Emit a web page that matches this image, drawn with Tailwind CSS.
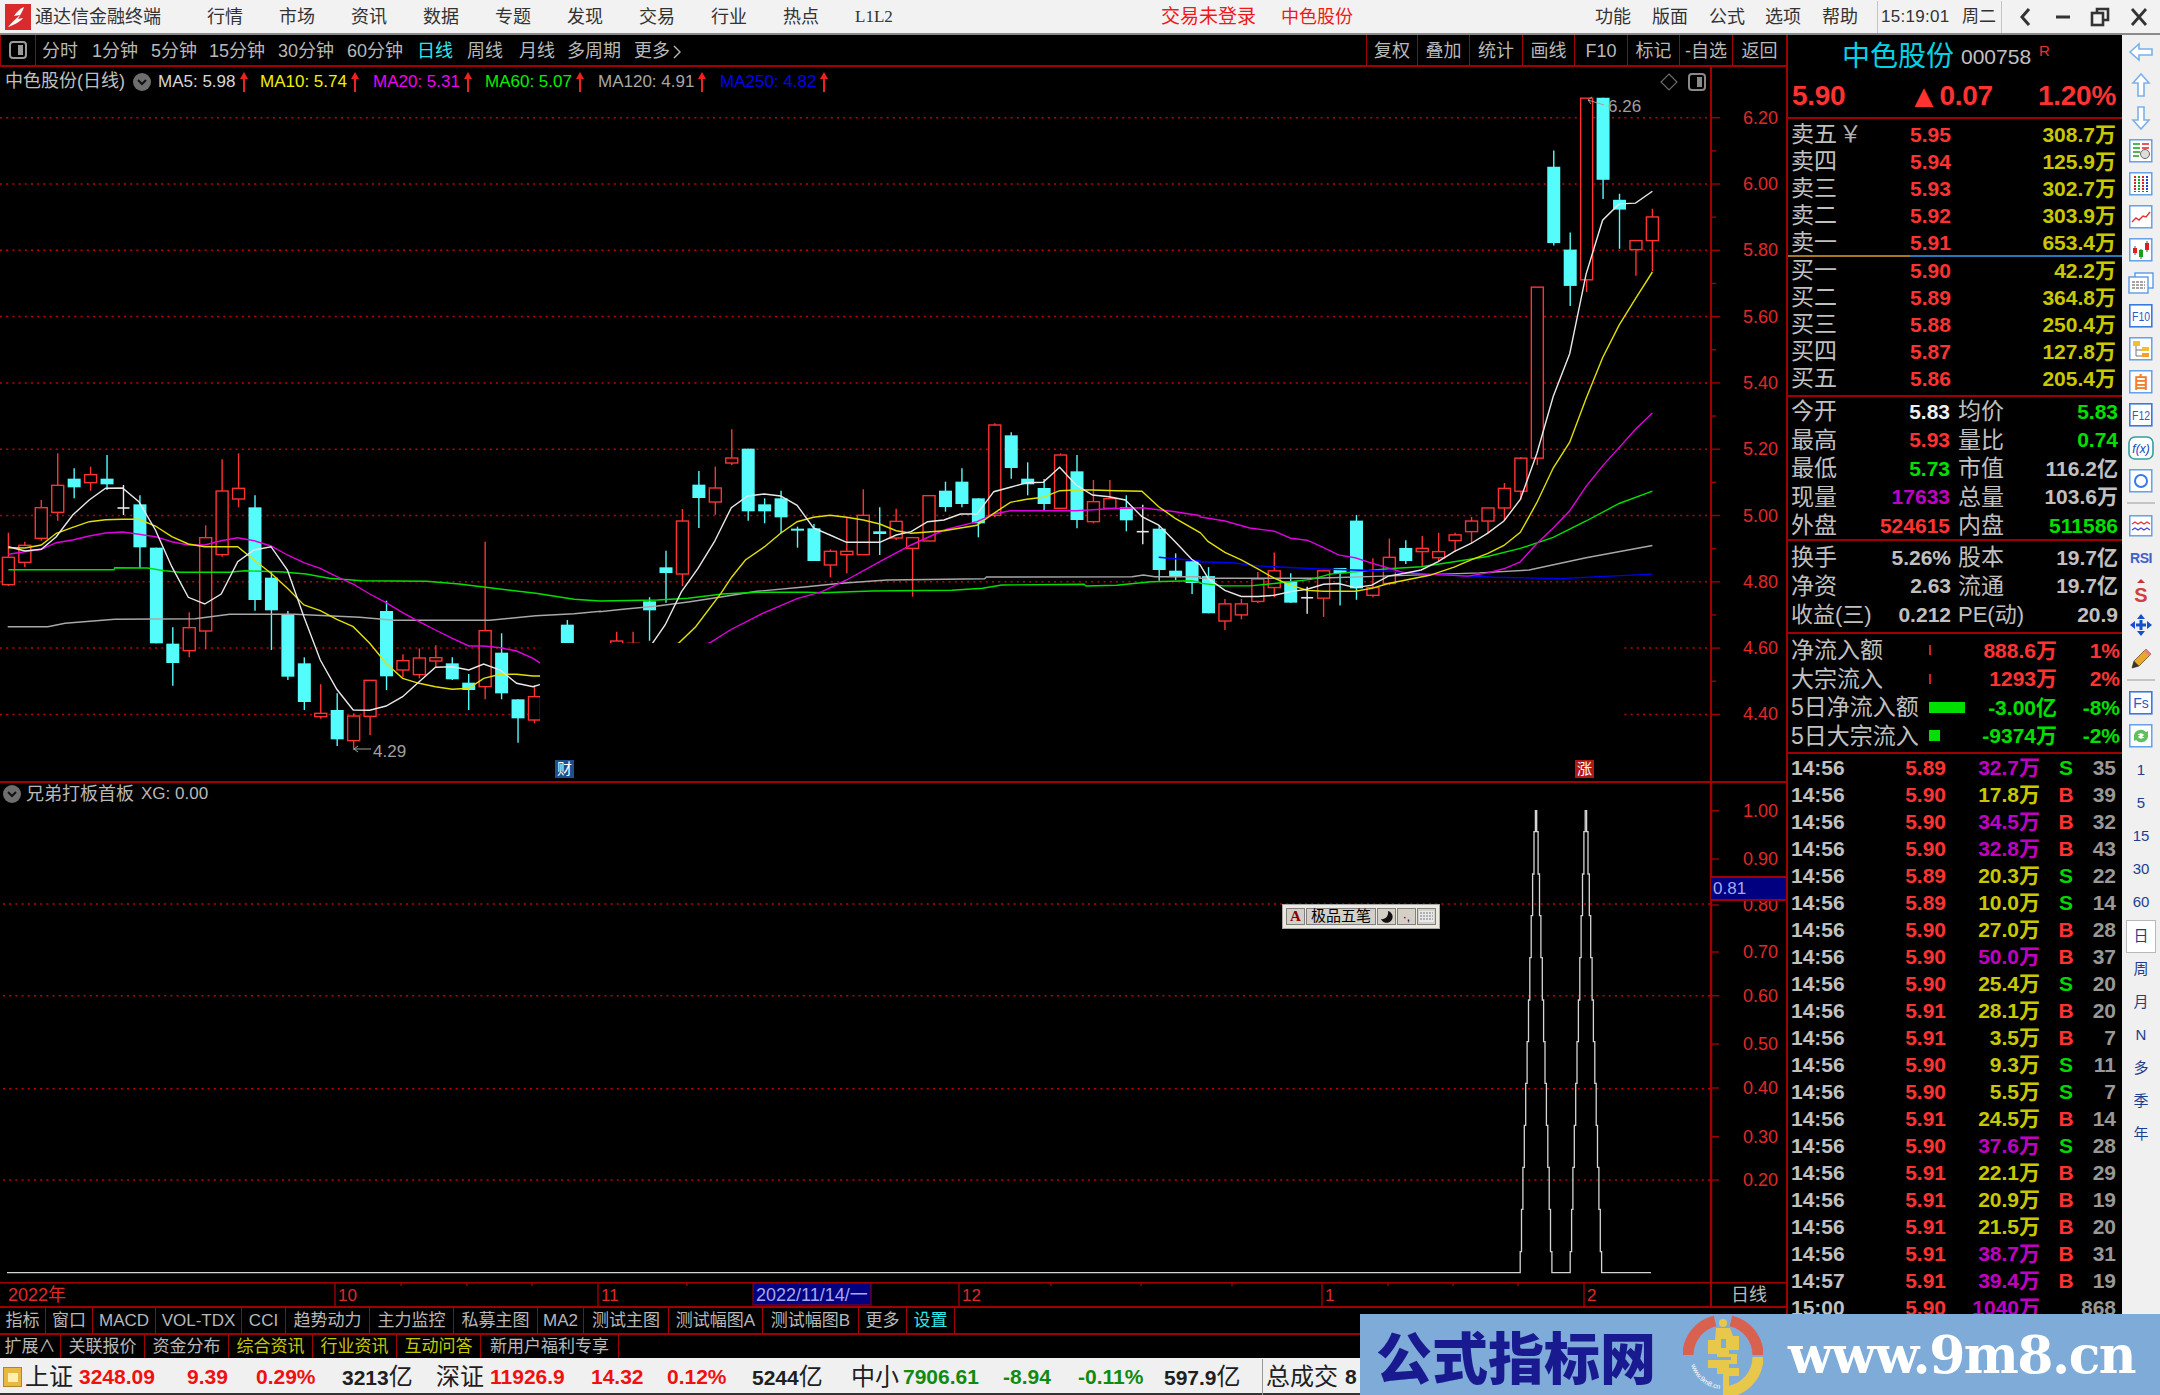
<!DOCTYPE html>
<html lang="zh-CN">
<head>
    <meta charset="UTF-8">
    <title>通达信金融终端 - 中色股份</title>
    <script src="https://cdn.jsdelivr.net/npm/@tailwindcss/browser@4"></script>
</head>
<body class="bg-black">
<div class="relative w-[2160px] h-[1395px] overflow-hidden flex flex-col bg-black font-['Liberation_Sans','Noto_Sans_CJK_SC',sans-serif]">

    <!-- Title bar -->
    <div class="h-[35px] shrink-0 flex items-center pt-[1px] bg-[#f2f2f2] border-b-2 border-[#8a8a8a] text-[18px] text-[#333]">
        <div class="w-[35px] h-full flex items-center justify-center">
            <svg width="26" height="26" viewBox="0 0 26 26"><rect width="26" height="26" fill="#d92b2b"/><path d="M19 3C14 5 11 9 9 12l6-1c-3 3-8 7-12 12 6-2 12-5 15-9l-5 1c2-4 5-8 6-12z" fill="#fff"/></svg>
        </div>
        <span class="w-[172px]">通达信金融终端</span>
        <span class="w-[72px]">行情</span>
        <span class="w-[72px]">市场</span>
        <span class="w-[72px]">资讯</span>
        <span class="w-[72px]">数据</span>
        <span class="w-[72px]">专题</span>
        <span class="w-[72px]">发现</span>
        <span class="w-[72px]">交易</span>
        <span class="w-[72px]">行业</span>
        <span class="w-[72px]">热点</span>
        <span class="w-[306px] text-[17px] font-['Liberation_Serif']">L1L2</span>
        <span class="w-[120px] text-[19px] whitespace-nowrap text-[#f01818]">交易未登录</span>
        <span class="w-[314px] text-[#f01818]">中色股份</span>
        <span class="w-[57px]">功能</span>
        <span class="w-[57px]">版面</span>
        <span class="w-[56px]">公式</span>
        <span class="w-[57px]">选项</span>
        <span class="w-[55px]">帮助</span>
        <div class="w-[125px] h-full flex items-center border-x border-[#c4c4c4] pl-[3px] text-[17px]">
            <span class="w-[81px] tracking-[0.3px]">15:19:01</span><span>周二</span>
        </div>
        <div class="flex-1 flex items-center justify-around pl-[6px] pr-[2px] text-[#333]">
            <svg width="18" height="22" viewBox="0 0 18 22" fill="none" stroke="#333" stroke-width="3"><path d="M12 3L5 11l7 8"/></svg>
            <svg width="18" height="22" viewBox="0 0 18 22" fill="none" stroke="#333" stroke-width="3"><path d="M2 11h14"/></svg>
            <svg width="20" height="22" viewBox="0 0 20 22" fill="none" stroke="#333" stroke-width="2.6"><rect x="2" y="7" width="11" height="12"/><path d="M7 7V3h11v11h-5"/></svg>
            <svg width="20" height="22" viewBox="0 0 20 22" fill="none" stroke="#333" stroke-width="2.8"><path d="M3 3l14 16M17 3L3 19"/></svg>
        </div>
    </div>

    <!-- Middle -->
    <div class="flex-1 flex min-h-0">
        <!-- Chart column -->
        <div class="w-[1788px] shrink-0 flex flex-col border-r-2 border-[#a00000]">
            <!-- Period toolbar -->
            <div class="h-[32px] shrink-0 flex items-center border-b-2 border-[#a00000] text-[18px] text-[#b8b8b8]">
                <div class="w-[36px] h-full flex items-center justify-center border-x border-[#a00000]">
                    <svg width="18" height="18" viewBox="0 0 18 18"><rect x="1" y="1" width="16" height="16" rx="3" fill="none" stroke="#9a9a9a" stroke-width="2"/><rect x="9" y="4" width="5" height="10" fill="#9a9a9a"/></svg>
                </div>
                <div class="h-full flex items-center pt-[3px] whitespace-nowrap">
                    <span class="ml-[6px] w-[50px]">分时</span>
                    <span class="w-[59px]">1分钟</span>
                    <span class="w-[58px]">5分钟</span>
                    <span class="w-[69px]">15分钟</span>
                    <span class="w-[69px]">30分钟</span>
                    <span class="w-[70px]">60分钟</span>
                    <span class="w-[50px] text-[#30e8e8]">日线</span>
                    <span class="w-[52px]">周线</span>
                    <span class="w-[48px]">月线</span>
                    <span class="w-[67px]">多周期</span>
                    <span class="flex items-center">更多<svg class="ml-[2px]" width="10" height="16" viewBox="0 0 10 16" fill="none" stroke="#b8b8b8" stroke-width="1.4"><path d="M2 2l6 6-6 6"/></svg></span>
                </div>
                <div class="ml-auto flex h-full">
                    <span class="w-[51px] pt-[3px] flex items-center justify-center border-l border-[#a00000]">复权</span>
                    <span class="w-[52px] pt-[3px] flex items-center justify-center border-l border-[#a00000]">叠加</span>
                    <span class="w-[53px] pt-[3px] flex items-center justify-center border-l border-[#a00000]">统计</span>
                    <span class="w-[52px] pt-[3px] flex items-center justify-center border-l border-[#a00000]">画线</span>
                    <span class="w-[53px] pt-[3px] flex items-center justify-center border-l border-[#a00000]">F10</span>
                    <span class="w-[52px] pt-[3px] flex items-center justify-center border-l border-[#a00000]">标记</span>
                    <span class="w-[53px] pt-[3px] flex items-center justify-center border-l border-[#a00000]">-自选</span>
                    <span class="w-[54px] pt-[3px] flex items-center justify-center border-l border-[#a00000]">返回</span>
                </div>
            </div>

            <!-- Main chart -->
            <div class="relative h-[714px] shrink-0">
                <svg id="main" class="block" width="1786" height="714" viewBox="0 67 1786 714"></svg>
                <div class="absolute left-[5px] top-0 h-[29px] flex items-center text-[17px] whitespace-nowrap">
                    <span class="w-[128px] text-[18px] text-[#c0c0c0]">中色股份(日线)</span>
                    <span class="w-[25px] flex">
                        <svg width="18" height="18" viewBox="0 0 18 18"><circle cx="9" cy="9" r="9" fill="#6e6e6e"/><path d="M5 7l4 4 4-4" fill="none" stroke="#111" stroke-width="2"/></svg>
                    </span>
                    <span class="w-[102px] flex items-center text-[#d8d8d8]">MA5: 5.98<svg class="ml-[3px]" width="10" height="20" viewBox="0 0 10 20"><path d="M5 0l4 7H6v13H4V7H1z" fill="#ef2020"/></svg></span>
                    <span class="w-[113px] flex items-center text-[#f0f000]">MA10: 5.74<svg class="ml-[3px]" width="10" height="20" viewBox="0 0 10 20"><path d="M5 0l4 7H6v13H4V7H1z" fill="#ef2020"/></svg></span>
                    <span class="w-[112px] flex items-center text-[#f000f0]">MA20: 5.31<svg class="ml-[3px]" width="10" height="20" viewBox="0 0 10 20"><path d="M5 0l4 7H6v13H4V7H1z" fill="#ef2020"/></svg></span>
                    <span class="w-[113px] flex items-center text-[#00f000]">MA60: 5.07<svg class="ml-[3px]" width="10" height="20" viewBox="0 0 10 20"><path d="M5 0l4 7H6v13H4V7H1z" fill="#ef2020"/></svg></span>
                    <span class="w-[122px] flex items-center text-[#a8a8a8]">MA120: 4.91<svg class="ml-[3px]" width="10" height="20" viewBox="0 0 10 20"><path d="M5 0l4 7H6v13H4V7H1z" fill="#ef2020"/></svg></span>
                    <span class="flex items-center text-[#0000f0]">MA250: 4.82<svg class="ml-[3px]" width="10" height="20" viewBox="0 0 10 20"><path d="M5 0l4 7H6v13H4V7H1z" fill="#ef2020"/></svg></span>
                </div>
                <svg class="absolute left-[1660px] top-[6px]" width="18" height="18" viewBox="0 0 18 18"><path d="M9 1l8 8-8 8-8-8z" fill="none" stroke="#6a6a6a" stroke-width="1.2"/></svg>
                <svg class="absolute left-[1688px] top-[6px]" width="18" height="18" viewBox="0 0 18 18"><rect x="1" y="1" width="16" height="16" rx="3" fill="none" stroke="#8a8a8a" stroke-width="2"/><rect x="9" y="4" width="5" height="10" fill="#8a8a8a"/></svg>
                <span class="absolute left-[555px] top-[693px] w-[19px] h-[18px] flex items-center justify-center bg-[#1c4f8e] text-white text-[15px]">财</span>
                <span class="absolute left-[1575px] top-[693px] w-[19px] h-[18px] flex items-center justify-center bg-[#b01818] text-white text-[15px]">涨</span>
            </div>

            <!-- Indicator panel -->
            <div class="relative h-[501px] shrink-0 border-t-2 border-[#a00000]">
                <svg id="sub" class="block" width="1786" height="499" viewBox="0 783 1786 499"></svg>
                <div class="absolute left-[3px] top-0 h-[22px] flex items-center text-[18px] text-[#b8b8b8] whitespace-nowrap">
                    <svg class="mr-[5px]" width="18" height="18" viewBox="0 0 18 18"><circle cx="9" cy="9" r="9" fill="#6e6e6e"/><path d="M5 7l4 4 4-4" fill="none" stroke="#111" stroke-width="2"/></svg>
                    <span class="w-[115px]">兄弟打板首板</span><span class="text-[17px]">XG: 0.00</span>
                </div>
                <span class="absolute left-[1711px] top-[93px] w-[75px] h-[25px] flex items-center bg-[#000080] border-y-2 border-[#a00000] text-[17px] text-[#a8a8f0] pl-[2px]">0.81</span>
                <!-- IME bar -->
                <div class="absolute left-[1282px] top-[121px] w-[158px] h-[25px] flex items-stretch p-[3px] gap-[1px] bg-[#ece9e0] border border-[#a8a8a8] text-black text-[15px]">
                    <span class="w-[19px] flex items-center justify-center bg-[#d4d0c8] border border-[#808080] text-[#8a0000] font-bold font-['Liberation_Serif']">A</span>
                    <span class="w-[70px] flex items-center justify-center bg-[#d4d0c8] border border-[#808080]">极品五笔</span>
                    <span class="w-[19px] flex items-center justify-center bg-[#d4d0c8] border border-[#808080]"><svg width="13" height="13" viewBox="0 0 13 13"><path d="M8 1a6 6 0 1 1-7 8c4 1 8-3 7-8z" fill="#111"/></svg></span>
                    <span class="w-[19px] flex items-center justify-center bg-[#d4d0c8] border border-[#808080] text-[12px]">·,</span>
                    <span class="w-[19px] flex items-center justify-center bg-[#d4d0c8] border border-[#808080]"><svg width="15" height="11" viewBox="0 0 15 11"><rect width="15" height="11" fill="#e8e8e8"/><path d="M1 2h13M1 5h13M1 8h13" stroke="#777" stroke-dasharray="2 1"/></svg></span>
                </div>
            </div>

            <!-- Date axis -->
            <svg id="dates" class="block shrink-0" width="1786" height="24" viewBox="0 1282 1786 24"></svg>

            <!-- Tabs row 1 -->
            <div class="h-[25px] shrink-0 flex border-y-2 border-[#a00000] box-content text-[17px] text-[#b8b8b8] whitespace-nowrap">
                <span class="w-[46px] flex items-center justify-center border-r border-[#a00000]">指标</span>
                <span class="w-[47px] flex items-center justify-center border-r border-[#a00000]">窗口</span>
                <span class="w-[63px] flex items-center justify-center border-r border-[#a00000]">MACD</span>
                <span class="w-[86px] flex items-center justify-center border-r border-[#a00000]">VOL-TDX</span>
                <span class="w-[44px] flex items-center justify-center border-r border-[#a00000]">CCI</span>
                <span class="w-[84px] flex items-center justify-center border-r border-[#a00000]">趋势动力</span>
                <span class="w-[84px] flex items-center justify-center border-r border-[#a00000]">主力监控</span>
                <span class="w-[84px] flex items-center justify-center border-r border-[#a00000]">私募主图</span>
                <span class="w-[46px] flex items-center justify-center border-r border-[#a00000]">MA2</span>
                <span class="w-[85px] flex items-center justify-center border-r border-[#a00000]">测试主图</span>
                <span class="w-[94px] flex items-center justify-center border-r border-[#a00000]">测试幅图A</span>
                <span class="w-[96px] flex items-center justify-center border-r border-[#a00000]">测试幅图B</span>
                <span class="w-[48px] flex items-center justify-center border-r border-[#a00000]">更多</span>
                <span class="w-[48px] flex items-center justify-center border-r border-[#a00000] text-[#30e8e8]">设置</span>
            </div>
            <!-- Tabs row 2 -->
            <div class="h-[23px] shrink-0 flex border-b-2 border-[#a00000] box-content text-[17px] text-[#b8b8b8] whitespace-nowrap">
                <span class="w-[61px] flex items-center justify-center border-r border-[#a00000]">扩展∧</span>
                <span class="w-[84px] flex items-center justify-center border-r border-[#a00000]">关联报价</span>
                <span class="w-[84px] flex items-center justify-center border-r border-[#a00000]">资金分布</span>
                <span class="w-[84px] flex items-center justify-center border-r border-[#a00000] text-[#c8c800]">综合资讯</span>
                <span class="w-[84px] flex items-center justify-center border-r border-[#a00000] text-[#c8c800]">行业资讯</span>
                <span class="w-[84px] flex items-center justify-center border-r border-[#a00000] text-[#c8c800]">互动问答</span>
                <span class="w-[138px] flex items-center justify-center border-r border-[#a00000]">新用户福利专享</span>
            </div>
        </div>

        <!-- Quote column -->
        <div class="w-[334px] shrink-0 flex flex-col overflow-hidden bg-black text-[21px] text-[#c0c0c0]">
            <div class="h-[84px] shrink-0 border-b-2 border-[#a00000] flex flex-col pt-[3px]">
                <div class="h-[37px] flex items-center pl-[54px] whitespace-nowrap">
                    <span class="w-[119px] text-[28px] leading-none text-[#00d4e4]">中色股份</span>
                    <span class="w-[78px]">000758</span>
                    <span class="text-[15px] text-[#f03030] -mt-[10px]">R</span>
                </div>
                <div class="h-[42px] flex items-center font-bold text-[28px] text-[#ff3232] pl-[4px] pr-[6px] tracking-[-0.3px]">
                    <span class="w-[116px]">5.90</span>
                    <span class="flex-1 flex items-center"><span class="text-[32px] leading-none">▲</span>0.07</span>
                    <span>1.20%</span>
                </div>
            </div>
            <div class="h-[136px] shrink-0 flex flex-col pt-[2px] pr-[6px]" id="sell"></div>
            <div class="h-[2px] shrink-0 flex"><span class="w-[122px] bg-[#a87820]"></span><span class="flex-1 bg-[#2878b8]"></span></div>
            <div class="h-[140px] shrink-0 flex flex-col pr-[6px] border-b-2 border-[#a00000]" id="buy"></div>

            <div class="h-[144px] shrink-0 flex flex-col pl-[3px] pr-[4px] border-b-2 border-[#a00000]">
                <div class="h-[28.6px] flex items-center"><span class="w-[97px] text-[23px]">今开</span><span class="w-[62px] text-right font-bold text-[#f0f0f0]">5.83</span><span class="w-[50px] ml-[8px] text-[23px]">均价</span><span class="flex-1 text-right font-bold text-[#00e000]">5.83</span></div>
                <div class="h-[28.6px] flex items-center"><span class="w-[97px] text-[23px]">最高</span><span class="w-[62px] text-right font-bold text-[#ff3232]">5.93</span><span class="w-[50px] ml-[8px] text-[23px]">量比</span><span class="flex-1 text-right font-bold text-[#00e000]">0.74</span></div>
                <div class="h-[28.6px] flex items-center"><span class="w-[97px] text-[23px]">最低</span><span class="w-[62px] text-right font-bold text-[#00e000]">5.73</span><span class="w-[50px] ml-[8px] text-[23px]">市值</span><span class="flex-1 text-right font-bold">116.2亿</span></div>
                <div class="h-[28.6px] flex items-center"><span class="w-[70px] text-[23px]">现量</span><span class="w-[89px] text-right font-bold text-[#c000c0]">17633</span><span class="w-[50px] ml-[8px] text-[23px]">总量</span><span class="flex-1 text-right font-bold">103.6万</span></div>
                <div class="h-[28.6px] flex items-center"><span class="w-[70px] text-[23px]">外盘</span><span class="w-[89px] text-right font-bold text-[#ff3232]">524615</span><span class="w-[50px] ml-[8px] text-[23px]">内盘</span><span class="flex-1 text-right font-bold text-[#00e000]">511586</span></div>
            </div>

            <div class="h-[93px] shrink-0 flex flex-col pl-[3px] pr-[4px] pt-[2px] border-b-2 border-[#a00000]">
                <div class="h-[28.6px] flex items-center"><span class="w-[80px] text-[23px]">换手</span><span class="w-[80px] text-right font-bold">5.26%</span><span class="w-[50px] ml-[7px] text-[23px]">股本</span><span class="flex-1 text-right font-bold">19.7亿</span></div>
                <div class="h-[28.6px] flex items-center"><span class="w-[80px] text-[23px]">净资</span><span class="w-[80px] text-right font-bold">2.63</span><span class="w-[50px] ml-[7px] text-[23px]">流通</span><span class="flex-1 text-right font-bold">19.7亿</span></div>
                <div class="h-[28.6px] flex items-center"><span class="w-[90px] text-[22px] whitespace-nowrap">收益(三)</span><span class="w-[70px] text-right font-bold">0.212</span><span class="w-[70px] ml-[7px] text-[22px] whitespace-nowrap">PE(动)</span><span class="flex-1 text-right font-bold">20.9</span></div>
            </div>

            <div class="h-[120px] shrink-0 flex flex-col pl-[3px] pr-[2px] pt-[2px] border-b-2 border-[#a00000]">
                <div class="h-[28.5px] flex items-center"><span class="w-[138px] text-[23px] whitespace-nowrap">净流入额</span><span class="w-[36px] flex"><span class="w-[2px] h-[10px] bg-[#d02020]"></span></span><span class="w-[92px] text-right font-bold text-[#ff3232]">888.6万</span><span class="flex-1 text-right font-bold text-[#ff3232]">1%</span></div>
                <div class="h-[28.5px] flex items-center"><span class="w-[138px] text-[23px] whitespace-nowrap">大宗流入</span><span class="w-[36px] flex"><span class="w-[2px] h-[10px] bg-[#d02020]"></span></span><span class="w-[92px] text-right font-bold text-[#ff3232]">1293万</span><span class="flex-1 text-right font-bold text-[#ff3232]">2%</span></div>
                <div class="h-[28.5px] flex items-center"><span class="w-[138px] text-[23px] whitespace-nowrap">5日净流入额</span><span class="w-[36px] flex"><span class="w-[36px] h-[11px] bg-[#00e000]"></span></span><span class="w-[92px] text-right font-bold text-[#00e000]">-3.00亿</span><span class="flex-1 text-right font-bold text-[#00e000]">-8%</span></div>
                <div class="h-[28.5px] flex items-center"><span class="w-[138px] text-[23px] whitespace-nowrap">5日大宗流入</span><span class="w-[36px] flex"><span class="w-[11px] h-[11px] bg-[#00e000]"></span></span><span class="w-[92px] text-right font-bold text-[#00e000]">-9374万</span><span class="flex-1 text-right font-bold text-[#00e000]">-2%</span></div>
            </div>

            <div id="ticks" class="flex-1 min-h-0 overflow-hidden flex flex-col"></div>
        </div>

        <!-- Tool column -->
        <div class="flex-1 flex flex-col items-center bg-[#f0f0f0] text-[15px] text-[#1c3f8f]">
            <div class="h-[33px] flex items-center"><svg width="26" height="20" viewBox="0 0 26 20" fill="#fff" stroke="#7ab0ea" stroke-width="1.6"><path d="M2 10l9-8v5h13v6H11v5z"/></svg></div>
            <div class="h-[33px] flex items-center"><svg width="20" height="26" viewBox="0 0 20 26" fill="#fff" stroke="#7ab0ea" stroke-width="1.6"><path d="M10 2l8 9h-5v13H7V11H2z"/></svg></div>
            <div class="h-[33px] flex items-center"><svg width="20" height="26" viewBox="0 0 20 26" fill="#fff" stroke="#7ab0ea" stroke-width="1.6"><path d="M10 24l8-9h-5V2H7v13H2z"/></svg></div>
            <div class="h-[33px] flex items-center"><svg width="24" height="24" viewBox="0 0 24 24"><rect x=".8" y=".8" width="22" height="22" fill="#fff" stroke="#5a9ae8" stroke-width="1.4"/><path d="M4 5h7M4 9h7M4 13h7M4 17h6" stroke="#19a019" stroke-width="1.6"/><path d="M13 5h7M13 9h7" stroke="#e02020" stroke-width="1.6"/><circle cx="16" cy="15" r="4.5" fill="#ddd" stroke="#666"/></svg></div>
            <div class="h-[33px] flex items-center"><svg width="24" height="24" viewBox="0 0 24 24"><rect x=".8" y=".8" width="22" height="22" fill="#fff" stroke="#5a9ae8" stroke-width="1.4"/><g stroke-width="2" stroke-dasharray="2 1"><path d="M6 4v16" stroke="#e02020"/><path d="M10 4v16" stroke="#19a019"/><path d="M14 4v16" stroke="#e02020"/><path d="M18 4v16" stroke="#2040e0"/></g></svg></div>
            <div class="h-[33px] flex items-center"><svg width="24" height="24" viewBox="0 0 24 24"><rect x=".8" y=".8" width="22" height="22" fill="#fff" stroke="#5a9ae8" stroke-width="1.4"/><path d="M3 17l4-4 3 2 4-4 3 1 4-5" fill="none" stroke="#e83030" stroke-width="1.4"/></svg></div>
            <div class="h-[33px] flex items-center"><svg width="24" height="24" viewBox="0 0 24 24"><rect x=".8" y=".8" width="22" height="22" fill="#fff" stroke="#5a9ae8" stroke-width="1.4"/><path d="M6 8v9M12 11v10M18 3v11" stroke="#555"/><rect x="4" y="10" width="4" height="5" fill="#e02020"/><rect x="10" y="12" width="4" height="7" fill="#19a019"/><rect x="16" y="5" width="4" height="7" fill="#e02020"/></svg></div>
            <div class="h-[33px] flex items-center"><svg width="26" height="24" viewBox="0 0 26 24" fill="#fff" stroke="#5a9ae8" stroke-width="1.4"><rect x="7" y="2" width="18" height="15"/><rect x="1" y="6" width="19" height="16"/><path d="M4 11h13M4 14h13M4 17h13" stroke="#888" stroke-dasharray="3 1"/></svg></div>
            <div class="h-[33px] flex items-center"><svg width="24" height="24" viewBox="0 0 24 24"><rect x=".8" y=".8" width="22" height="22" fill="#fff" stroke="#3a7ae0" stroke-width="1.6"/><text x="12" y="17" text-anchor="middle" font-size="13" fill="#2a5bc8" textLength="18" lengthAdjust="spacingAndGlyphs">F10</text></svg></div>
            <div class="h-[33px] flex items-center"><svg width="24" height="24" viewBox="0 0 24 24"><rect x=".8" y=".8" width="22" height="22" fill="#fff" stroke="#5a9ae8" stroke-width="1.4"/><path d="M7 8v11h7M7 13h7" fill="none" stroke="#777"/><rect x="4" y="4" width="7" height="5" fill="#f0c030"/><rect x="13" y="10" width="7" height="4" fill="#f0c030"/><rect x="13" y="16" width="7" height="4" fill="#f0a030"/></svg></div>
            <div class="h-[33px] flex items-center"><svg width="24" height="24" viewBox="0 0 24 24"><rect x=".8" y=".8" width="22" height="22" fill="#fff" stroke="#5a9ae8" stroke-width="1.4"/><text x="12" y="18" text-anchor="middle" font-size="16" font-weight="700" fill="#f08030">自</text></svg></div>
            <div class="h-[33px] flex items-center"><svg width="24" height="24" viewBox="0 0 24 24"><rect x=".8" y=".8" width="22" height="22" fill="#fff" stroke="#3a7ae0" stroke-width="1.6"/><text x="12" y="17" text-anchor="middle" font-size="13" fill="#2a5bc8" textLength="18" lengthAdjust="spacingAndGlyphs">F12</text></svg></div>
            <div class="h-[33px] flex items-center"><svg width="26" height="24" viewBox="0 0 26 24"><rect x="1" y="1" width="24" height="22" rx="6" fill="#fff" stroke="#30a0a0" stroke-width="1.6"/><text x="13" y="17" text-anchor="middle" font-size="12" font-style="italic" fill="#2040c0">f(x)</text></svg></div>
            <div class="h-[33px] flex items-center"><svg width="24" height="24" viewBox="0 0 24 24"><rect x=".8" y=".8" width="22" height="22" fill="#fff" stroke="#5a9ae8" stroke-width="1.4"/><circle cx="12" cy="12" r="6" fill="none" stroke="#3a7ae0" stroke-width="2"/></svg></div>
            <div class="h-[12px] w-[28px] flex items-center"><span class="w-full h-[2px] bg-[#c4c4c4]"></span></div>
            <div class="h-[33px] flex items-center"><svg width="24" height="22" viewBox="0 0 24 22"><rect x=".8" y=".8" width="22" height="20" fill="#fff" stroke="#5a9ae8" stroke-width="1.4"/><path d="M3 9l3-2 3 2 3-2 3 2 3-2 3 2" fill="none" stroke="#e83030" stroke-width="1.2"/><path d="M3 15l3-2 3 2 3-2 3 2 3-2 3 2" fill="none" stroke="#4040e0" stroke-width="1.2"/></svg></div>
            <div class="h-[33px] flex items-center font-bold text-[14px] text-[#4060c8] tracking-[-0.5px]">RSI</div>
            <div class="h-[33px] flex items-center"><svg width="22" height="28" viewBox="0 0 22 28"><path d="M11 1l4 4H7z" fill="#d03030"/><text x="11" y="24" text-anchor="middle" font-size="20" font-weight="700" fill="#d04040">S</text></svg></div>
            <div class="h-[33px] flex items-center"><svg width="24" height="24" viewBox="0 0 24 24" fill="#1450c8"><path d="M12 1l4 5h-8zM12 23l-4-5h8zM1 12l5-4v8zM23 12l-5 4V8z"/><rect x="7" y="10.5" width="10" height="3"/><rect x="10.5" y="7" width="3" height="10"/></svg></div>
            <div class="h-[33px] flex items-center"><svg width="24" height="24" viewBox="0 0 24 24"><path d="M3 22l2-7L17 3l5 5L10 20z" fill="#e8a830" stroke="#8a6a30"/><path d="M17 3l5 5-2 2-5-5z" fill="#e88080"/><path d="M3 22l2-7 5 5z" fill="#333"/></svg></div>
            <div class="h-[12px] w-[28px] flex items-center"><span class="w-full h-[2px] bg-[#c4c4c4]"></span></div>
            <div class="h-[33px] flex items-center"><svg width="24" height="24" viewBox="0 0 24 24"><rect x=".8" y=".8" width="22" height="22" fill="#fff" stroke="#3a7ae0" stroke-width="1.6"/><text x="12" y="17" text-anchor="middle" font-size="14" fill="#2a5bc8">Fs</text></svg></div>
            <div class="h-[33px] flex items-center"><svg width="24" height="24" viewBox="0 0 24 24"><rect x=".8" y=".8" width="22" height="22" fill="#fff" stroke="#5a9ae8" stroke-width="1.4"/><path d="M5 11a7 7 0 0 1 12-3l2-1v6h-6l2-2a4 4 0 0 0-7 1zM19 13a7 7 0 0 1-12 3l-2 1v-6h6l-2 2a4 4 0 0 0 7-1z" fill="#60c060"/></svg></div>
            <div class="h-[33px] flex items-center mt-[2px]">1</div>
            <div class="h-[33px] flex items-center">5</div>
            <div class="h-[33px] flex items-center">15</div>
            <div class="h-[33px] flex items-center">30</div>
            <div class="h-[33px] flex items-center">60</div>
            <div class="h-[33px] w-[30px] flex items-center justify-center mt-[1px] bg-white border border-[#b8b8b8]">日</div>
            <div class="h-[33px] flex items-center">周</div>
            <div class="h-[33px] flex items-center">月</div>
            <div class="h-[33px] flex items-center">N</div>
            <div class="h-[33px] flex items-center">多</div>
            <div class="h-[33px] flex items-center">季</div>
            <div class="h-[33px] flex items-center">年</div>
        </div>
    </div>

    <!-- Status bar -->
    <div class="h-[37px] shrink-0 flex items-center pt-[3px] bg-[#f0f0f0] border-b-2 border-[#333] text-[21px] font-bold text-[#202020] whitespace-nowrap">
        <span class="ml-[3px] w-[19px] h-[20px] flex items-center justify-center bg-[#e8b840] border border-[#b08820]"><span class="w-[10px] h-[9px] bg-[#fff0b0]"></span></span>
        <span class="ml-[3px] w-[54px] text-[24px] font-normal">上证</span>
        <span class="w-[108px] text-[#f01010]">3248.09</span>
        <span class="w-[69px] text-[#f01010]">9.39</span>
        <span class="w-[86px] text-[#f01010]">0.29%</span>
        <span class="w-[94px]">3213<span class="font-normal text-[24px]">亿</span></span>
        <span class="w-[54px] text-[24px] font-normal">深证</span>
        <span class="w-[101px] text-[#f01010]">11926.9</span>
        <span class="w-[76px] text-[#f01010]">14.32</span>
        <span class="w-[85px] text-[#f01010]">0.12%</span>
        <span class="w-[99px]">5244<span class="font-normal text-[24px]">亿</span></span>
        <span class="w-[52px] text-[24px] font-normal">中小</span>
        <span class="w-[100px] text-[#108a10]">7906.61</span>
        <span class="w-[75px] text-[#108a10]">-8.94</span>
        <span class="w-[86px] text-[#108a10]">-0.11%</span>
        <span class="w-[98px]">597.9<span class="font-normal text-[24px]">亿</span></span>
        <span class="w-[83px] text-[24px] font-normal border-l border-[#999] pl-[3px]">总成交</span>
        <span>8</span>
    </div>

    <!-- Site watermark, lies over the chart corner -->
    <div class="absolute left-[1360px] top-[1314px] w-[800px] h-[81px] flex items-center bg-[#7fabd9]">
        <span class="ml-[16px] w-[307px] text-[56px] leading-none font-black text-[#1a1a90] font-['Noto_Sans_CJK_SC',sans-serif]">公式指标网</span>
        <svg width="80" height="80" viewBox="0 0 80 80">
            <path d="M5 40A35 35 0 0 1 32 6" fill="none" stroke="#d9614f" stroke-width="11"/>
            <path d="M48 6A35 35 0 0 1 75 40" fill="none" stroke="#d9614f" stroke-width="11"/>
            <path d="M75 42A35 35 0 0 1 40 77" fill="none" stroke="#e8c84a" stroke-width="11"/>
            <circle cx="40" cy="8" r="4" fill="#e8c84a"/>
            <path d="M33 13h14l3 8h6v14H46v4h8v10h-8v4h10v8H46v13h-6V59h-6v-6h-9v-8h9v-6h-9V25h7z" fill="#e8c84a"/>
            <path d="M38 24h5v9h-5zM33 42h15v3H33z" fill="#7fabd9"/>
            <path id="wm-arc" d="M8 50A34 34 0 0 0 36 74" fill="none"/>
            <text font-size="7" fill="#fff"><textPath href="#wm-arc">www.9m8.cn</textPath></text>
        </svg>
        <span class="ml-[25px] text-[52px] leading-none font-bold text-white tracking-[-1.5px] font-['DejaVu_Serif',serif]">www.9m8.cn</span>
    </div>
</div>

<script>
    // crop coordinates read off the reference, converted to page pixels
    const px = {
        a: [v => v / 2.613, v => 420 + v / 3],
        b: [v => 600 + v / 2.613, v => 400 + v / 3],
        c: [v => 1200 + v / 2.613, v => 70 + v / 2.45]
    };
    const R = '#ff3232', C = '#54fcfc', W = '#e8e8e8';

    // [index, colour, wick top, body top, body bottom, wick bottom]
    const candles = [
        ['a', [[0,R,338,412,494,498],[1,R,365,376,427,441],[2,R,240,263,355,362],[3,R,100,196,277,302],[4,C,145,176,202,235],[5,R,140,164,188,212],[6,C,105,176,193,210],[7,W,195,264,264,285],[8,C,226,253,382,445],[9,C,383,383,670,670],[10,C,622,671,729,797],[11,R,577,623,692,712],[12,R,316,353,633,688],[13,R,118,213,404,410],[14,R,100,205,237,262],[15,C,226,262,540,572],[16,C,455,473,571,690],[17,C,573,584,770,780],[18,C,712,730,846,870],[19,R,793,880,890,896],[20,C,820,870,958,978],[21,R,880,888,962,990],[22,R,781,781,889,945],[23,C,542,573,769,810],[24,R,703,722,750,772],[25,R,685,714,764,775],[26,R,676,713,723,742],[27,C,712,730,778,780],[28,C,762,788,810,870],[29,R,365,632,800,838],[30,C,640,698,820,838],[31,C,838,838,895,968],[32,R,795,830,900,910],[34,C,600,614,671,671]]],
        ['b', [[37,R,695,723,760,760],[38,R,695,730,760,760],[39,C,592,604,631,722],[40,C,452,502,519,608],[41,R,327,363,522,558],[42,C,213,254,294,384],[43,R,200,264,306,344],[44,R,88,174,189,195],[45,C,146,146,334,362],[46,C,295,313,334,370],[47,C,272,295,352,400],[48,C,380,386,392,443],[49,C,372,385,483,483],[50,R,448,454,495,532],[51,R,352,454,464,520],[52,R,268,346,464,464],[53,C,322,394,402,465],[54,R,326,364,414,420],[55,R,413,413,445,590],[56,R,287,287,423,423],[57,C,245,272,321,335],[58,C,205,245,312,322],[59,C,295,295,370,412],[60,R,70,75,346,352],[61,C,97,106,204,236],[62,C,187,236,253,286],[63,C,237,264,312,330],[64,R,160,165,325,325],[65,C,165,214,360,385],[66,R,240,305,365,370],[67,R,240,296,325,325],[68,C,286,322,361,394],[69,W,314,395,395,433],[70,C,375,386,510,542],[71,C,460,512,530,540],[72,C,484,484,549,582]]],
        ['c', [[73,C,1218,1240,1331,1331],[74,R,1296,1308,1350,1372],[75,R,1296,1308,1335,1346],[76,R,1230,1247,1302,1306],[77,R,1182,1227,1268,1292],[78,C,1233,1253,1305,1305],[79,W,1266,1293,1293,1332],[80,R,1223,1227,1294,1340],[81,C,1220,1220,1233,1312],[82,C,1090,1104,1270,1298],[83,R,1196,1268,1287,1292],[84,R,1148,1194,1258,1262],[85,C,1152,1171,1203,1210],[86,R,1142,1172,1180,1215],[87,R,1134,1180,1195,1205],[88,R,1134,1139,1153,1180],[89,R,1095,1105,1131,1160],[90,R,1073,1073,1105,1135],[91,R,1012,1025,1073,1102],[92,R,948,951,1032,1052],[93,R,532,532,951,968],[94,C,197,237,424,430],[95,C,398,440,529,578],[96,R,69,69,514,544],[97,C,68,68,269,316],[98,C,303,318,342,438],[99,R,418,418,440,504],[100,R,340,360,418,493]]]
    ];

    // moving averages, each as point lists per crop
    const lines = [
        { color: '#a8a8a8', a: [20,620,125,620,170,610,300,598,510,596,600,583,770,583,940,592,1030,601,1280,601,1400,587,1500,581,1568,574], b: [0,635,60,628,150,618,235,605,320,590,410,574,540,560,630,550,750,540,1005,536,1010,531,1390,530,1420,525,1450,530,1568,530], c: [0,1245,300,1245,480,1240,730,1232,860,1225,1009,1195,1182,1165] },
        { color: '#00e000', a: [22,449,298,449,300,443,385,444,430,452,470,457,600,457,640,452,740,456,800,462,860,475,945,482,1115,484,1200,492,1290,505,1400,520,1500,538,1568,543], b: [0,603,150,600,230,595,320,582,410,577,540,577,580,578,710,573,920,571,1000,565,1050,555,1265,553,1270,558,1350,556,1440,545,1546,542,1568,547], c: [0,1257,60,1264,130,1264,194,1258,290,1248,340,1235,492,1222,578,1217,664,1205,751,1192,837,1172,923,1145,1009,1105,1095,1062,1182,1032] },
        { color: '#0000f0', b: [1460,472,1568,483], c: [0,1205,85,1207,150,1215,300,1222,500,1228,600,1235,770,1243,945,1246,1030,1242,1182,1235] },
        { color: '#e000e0', a: [22,403,65,395,108,388,147,368,190,360,233,348,276,339,320,336,363,343,406,350,449,365,492,375,535,375,578,362,621,353,664,362,708,378,751,405,794,428,837,445,880,470,923,492,966,522,1009,548,1052,578,1095,605,1138,630,1182,655,1225,678,1264,678,1307,683,1350,693,1393,715,1410,728], b: [285,730,340,690,425,640,515,596,580,575,644,540,731,485,813,435,899,390,985,365,1029,342,1072,332,1158,332,1244,332,1330,326,1416,323,1503,335,1568,347], c: [0,1095,65,1105,130,1122,194,1130,237,1147,280,1152,323,1170,362,1188,405,1195,449,1208,492,1220,535,1232,590,1235,700,1240,751,1232,794,1222,837,1205,880,1160,923,1122,966,1080,1009,1020,1052,970,1095,925,1138,880,1182,840] },
        { color: '#e0e000', a: [22,383,65,384,108,375,147,340,190,322,233,305,276,299,320,298,363,298,406,318,449,350,492,372,535,380,621,380,664,420,708,460,751,505,794,555,837,572,880,598,923,620,966,670,1009,730,1052,775,1095,790,1138,800,1182,808,1225,805,1264,775,1307,763,1350,763,1393,768,1410,768], b: [205,730,250,680,316,580,345,530,380,480,430,440,472,400,515,365,558,352,601,346,644,352,688,360,731,372,774,392,813,400,856,396,899,392,942,384,985,376,1029,340,1072,307,1115,298,1158,292,1201,272,1244,270,1287,270,1350,272,1416,274,1460,320,1503,355,1568,398], c: [0,1133,21,1155,65,1182,108,1200,151,1222,194,1245,237,1262,280,1275,323,1277,405,1277,449,1270,492,1258,535,1250,600,1238,664,1218,708,1200,751,1185,794,1165,837,1133,880,1060,923,975,966,912,1009,805,1052,705,1095,625,1138,560,1182,495] },
        { color: '#e8e8e8', a: [22,380,65,393,108,388,147,350,190,285,233,240,276,205,320,204,363,245,406,330,449,440,492,532,535,552,578,522,621,425,664,390,708,380,751,450,794,590,837,720,880,808,923,870,966,871,1009,858,1052,830,1095,785,1138,742,1182,740,1225,750,1264,732,1307,750,1350,790,1393,800,1410,794], b: [137,730,170,675,213,575,256,505,299,425,343,323,386,288,429,282,472,288,515,316,558,384,601,405,644,427,731,427,774,405,813,395,856,365,899,360,942,342,985,342,1029,275,1072,262,1115,248,1158,247,1201,202,1244,255,1287,285,1330,290,1373,300,1416,350,1460,375,1503,425,1546,478], c: [0,1212,21,1245,65,1275,108,1290,151,1290,194,1287,237,1278,280,1272,323,1260,362,1258,405,1268,449,1262,492,1240,535,1233,578,1225,621,1205,664,1180,708,1160,751,1135,794,1105,837,1052,880,940,923,800,966,695,1009,500,1052,368,1095,328,1138,326,1182,297] }
    ];

    const GRID = '#c00000', AXIS = '#a00000', LABEL = '#e02828', AXIS_X = 1711;

    function drawMain() {
        let out = '<defs><clipPath id="vis"><path d="M0 67H1711V781H1621V643H540V781H0Z"/></clipPath></defs>';
        const price = (v) => 117.7 + (6.2 - v) * 331.5;
        out += '<g clip-path="url(#vis)">';
        for (const v of [6.2, 6, 5.8, 5.6, 5.4, 5.2, 5, 4.8, 4.6, 4.4]) {
            out += `<path d="M0 ${price(v)}H${AXIS_X}" stroke="${GRID}" stroke-width="1.5" stroke-dasharray="2 4.2"/>`;
        }
        for (const [crop, rows] of candles) {
            const y = px[crop][1];
            for (const [i, col, wt, bt, bb, wb] of rows) {
                const x = 8.4 + 16.44 * i, t = y(bt), h = y(bb) - t;
                out += `<path d="M${x} ${y(wt)}V${y(wb)}" stroke="${col}" stroke-width="1.4"/>`;
                if (h < 1) out += `<path d="M${x - 6} ${t}H${x + 6}" stroke="${col}" stroke-width="1.6"/>`;
                else if (col === C) out += `<rect x="${x - 6.5}" y="${t}" width="13" height="${h}" fill="${C}"/>`;
                else out += `<rect x="${x - 6}" y="${t}" width="12" height="${h}" fill="#000" stroke="${R}" stroke-width="1.4"/>`;
            }
        }
        for (const l of lines) {
            const pts = [];
            for (const crop of ['a', 'b', 'c']) {
                const d = l[crop] || [];
                for (let i = 0; i < d.length; i += 2) pts.push(px[crop][0](d[i]).toFixed(1) + ',' + px[crop][1](d[i + 1]).toFixed(1));
            }
            out += `<polyline points="${pts.join(' ')}" fill="none" stroke="${l.color}" stroke-width="1.4"/>`;
        }
        out += '</g>';
        // high and low marks
        out += '<path d="M1604 105L1588 100l4-3M1588 100l3 4" fill="none" stroke="#a0a0a0"/>';
        out += '<text x="1608" y="112" font-size="17" fill="#a0a0a0">6.26</text>';
        out += '<path d="M371 749H354l4-3M354 749l4 3" fill="none" stroke="#a0a0a0"/>';
        out += '<text x="373" y="757" font-size="17" fill="#a0a0a0">4.29</text>';
        // price axis
        out += `<path d="M${AXIS_X} 67V781" stroke="${AXIS}" stroke-width="2"/>`;
        for (let k = 0; k <= 18; k++) {
            const v = 6.2 - k * 0.1, major = k % 2 === 0, y = price(v);
            out += `<path d="M${AXIS_X} ${y}h${major ? 9 : 5}" stroke="${AXIS}" stroke-width="1.4"/>`;
            if (major) out += `<text x="1778" y="${y + 6}" text-anchor="end" font-size="18" fill="${LABEL}">${v.toFixed(2)}</text>`;
        }
        document.getElementById('main').innerHTML = out;
    }

    function drawSub() {
        const x = v => 1270 + v / 2.958, y = v => 780 + v / 3;
        const levels = [1415, 1288, 1162, 1036, 910, 785, 660, 533, 407, 282, 155, 92];
        const peak = (left, right) => {
            let d = '';
            const stepL = (right - left) / 2 / 12;
            levels.forEach((lv, k) => {
                const a = left + k * stepL;
                d += `L${x(a).toFixed(1)} ${y(k ? levels[k - 1] : 1478).toFixed(1)}L${x(a).toFixed(1)} ${y(lv).toFixed(1)}`;
            });
            [...levels].reverse().forEach((lv, k) => {
                const a = (left + right) / 2 + k * stepL;
                d += `L${x(a).toFixed(1)} ${y(lv).toFixed(1)}L${x(a).toFixed(1)} ${y(k < 11 ? levels[10 - k] : 1478).toFixed(1)}`;
            });
            return d;
        };
        let out = '';
        for (const v of [904, 995.7, 1088.7, 1180]) out += `<path d="M3 ${v}H${AXIS_X}" stroke="${GRID}" stroke-width="1.5" stroke-dasharray="2 4.2"/>`;
        out += `<path d="M7 1272.7${peak(740, 838)}${peak(888, 985)}L${x(985)} 1272.7H1651" fill="none" stroke="#d4d4d4" stroke-width="1.3"/>`;
        out += `<path d="M${AXIS_X} 783V1282" stroke="${AXIS}" stroke-width="2.4"/>`;
        const marks = [[810.7, '1.00'], [859, '0.90'], [905, '0.80'], [952, '0.70'], [995.7, '0.60'], [1044, '0.50'], [1088, '0.40'], [1136.7, '0.30'], [1180, '0.20']];
        for (const [yy, t] of marks) {
            out += `<path d="M${AXIS_X} ${yy}h8" stroke="${AXIS}" stroke-width="1.4"/>`;
            out += `<text x="1778" y="${yy + 6}" text-anchor="end" font-size="18" fill="${LABEL}">${t}</text>`;
        }
        document.getElementById('sub').innerHTML = out;
    }

    function drawDates() {
        let out = `<rect y="1282" width="1786" height="1.5" fill="${AXIS}"/>`;
        for (const t of [401, 467, 532, 687, 1051, 1141, 1232, 1388, 1453, 1518]) out += `<path d="M${t} 1282v4" stroke="${AXIS}" stroke-width="1.4"/>`;
        for (const [t, s] of [[335, '10'], [598, '11'], [959, '12'], [1322, '1'], [1584, '2']]) {
            out += `<path d="M${t} 1282v24" stroke="${AXIS}" stroke-width="1.4"/><text x="${t + 3}" y="1301" font-size="17" fill="${LABEL}">${s}</text>`;
        }
        out += `<text x="8" y="1301" font-size="18" fill="${LABEL}">2022年</text>`;
        out += `<rect x="753" y="1283" width="118" height="22" fill="#000080" stroke="${AXIS}"/><text x="756" y="1301" font-size="18" fill="#a8a8f0">2022/11/14/一</text>`;
        out += `<path d="M${AXIS_X} 1282v24" stroke="${AXIS}" stroke-width="2"/><text x="1731" y="1301" font-size="18" fill="#b8b8b8">日线</text>`;
        document.getElementById('dates').innerHTML = out;
    }

    function quoteRow(label, price, vol, extra) {
        return `<div class="h-[27px] shrink-0 flex items-center pl-[3px]">
            <span class="w-[119px] text-[23px] flex items-center">${label}${extra || ''}</span>
            <span class="w-[48px] font-bold text-[#ff3232]">${price}</span>
            <span class="flex-1 text-right font-bold text-[#c8c800]">${vol}</span>
        </div>`;
    }
    document.getElementById('sell').innerHTML = [
        ['卖五', '5.95', '308.7万', '<span class="ml-[2px] text-[#b0b0b0]">￥</span>'],
        ['卖四', '5.94', '125.9万'], ['卖三', '5.93', '302.7万'], ['卖二', '5.92', '303.9万'], ['卖一', '5.91', '653.4万']
    ].map(r => quoteRow(...r)).join('');
    document.getElementById('buy').innerHTML = [
        ['买一', '5.90', '42.2万'], ['买二', '5.89', '364.8万'], ['买三', '5.88', '250.4万'], ['买四', '5.87', '127.8万'], ['买五', '5.86', '205.4万']
    ].map(r => quoteRow(...r)).join('');

    // [time, price, volume, big order, side, count]
    const ticks = [
        ['14:56','5.89','32.7',1,'S','35'],['14:56','5.90','17.8',0,'B','39'],['14:56','5.90','34.5',1,'B','32'],['14:56','5.90','32.8',1,'B','43'],
        ['14:56','5.89','20.3',0,'S','22'],['14:56','5.89','10.0',0,'S','14'],['14:56','5.90','27.0',0,'B','28'],['14:56','5.90','50.0',1,'B','37'],
        ['14:56','5.90','25.4',0,'S','20'],['14:56','5.91','28.1',0,'B','20'],['14:56','5.91','3.5',0,'B','7'],['14:56','5.90','9.3',0,'S','11'],
        ['14:56','5.90','5.5',0,'S','7'],['14:56','5.91','24.5',0,'B','14'],['14:56','5.90','37.6',1,'S','28'],['14:56','5.91','22.1',0,'B','29'],
        ['14:56','5.91','20.9',0,'B','19'],['14:56','5.91','21.5',0,'B','20'],['14:56','5.91','38.7',1,'B','31'],['14:57','5.91','39.4',1,'B','19'],
        ['15:00','5.90','1040',1,'','868']
    ];
    document.getElementById('ticks').innerHTML = ticks.map(([t, p, v, big, side, n]) => `
        <div class="h-[27px] shrink-0 flex items-center font-bold">
            <span class="w-[55px] ml-[3px] text-[#c0c0c0]">${t}</span>
            <span class="w-[100px] text-right text-[#ff3232]">${p}</span>
            <span class="w-[94px] text-right ${big ? 'text-[#c000c0]' : 'text-[#c8c800]'}">${v}万</span>
            <span class="w-[24px] text-center ml-[14px] ${side === 'S' ? 'text-[#00d800]' : 'text-[#ff3232]'}">${side}</span>
            <span class="w-[38px] text-right text-[#989898]">${n}</span>
        </div>`).join('');

    drawMain();
    drawSub();
    drawDates();
</script>
</body>
</html>
